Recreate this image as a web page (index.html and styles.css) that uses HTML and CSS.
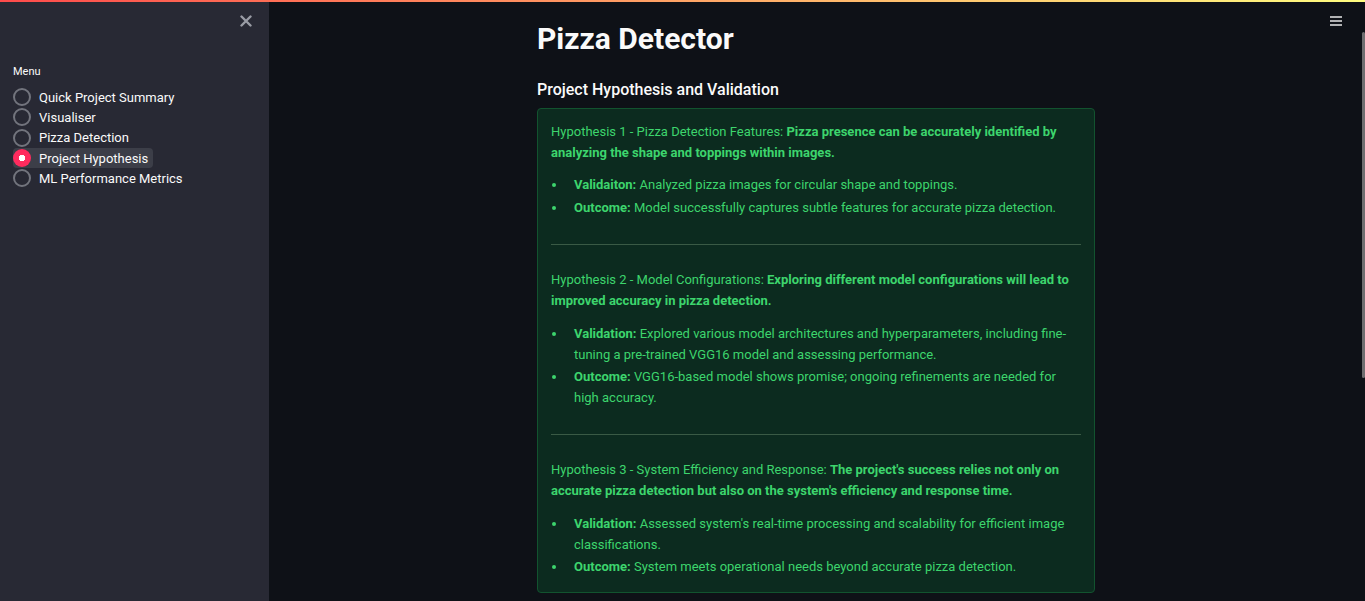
FILE: index.html
```
<!DOCTYPE html>
<html>
<head>
<meta charset="utf-8">
<link rel="stylesheet" href="styles.css">
</head>
<body>
<div class="decoration"></div>
<div class="app">
  <aside class="sidebar">
    <div class="sidebar-top">
      <button class="close" aria-label="Close sidebar">
        <svg width="12" height="12" viewBox="0 0 12 12"><path d="M1.5 1.5 L10.5 10.5 M10.5 1.5 L1.5 10.5" stroke="#9a9ca5" stroke-width="2.4" stroke-linecap="round"/></svg>
      </button>
    </div>
    <div class="menu-label">Menu</div>
    <ul class="radio-list">
      <li class="radio"><span class="dot"></span><span class="label">Quick Project Summary</span></li>
      <li class="radio"><span class="dot"></span><span class="label">Visualiser</span></li>
      <li class="radio"><span class="dot"></span><span class="label">Pizza Detection</span></li>
      <li class="radio checked"><span class="dot"></span><span class="label">Project Hypothesis</span></li>
      <li class="radio"><span class="dot"></span><span class="label">ML Performance Metrics</span></li>
    </ul>
  </aside>
  <main class="main">
    <div class="toolbar">
      <svg class="burger" width="12" height="10" viewBox="0 0 12 10"><path d="M0 1 H12 M0 5 H12 M0 9 H12" stroke="#e6e6e8" stroke-width="1.6"/></svg>
    </div>
    <div class="block">
      <h1 class="title">Pizza Detector</h1>
      <h3 class="subtitle">Project Hypothesis and Validation</h3>
      <div class="alert">
        <p class="first">Hypothesis 1 - Pizza Detection Features: <b>Pizza presence can be accurately identified by analyzing the shape and toppings within images.</b></p>
        <ul>
          <li><b>Validaiton:</b> Analyzed pizza images for circular shape and toppings.</li>
          <li><b>Outcome:</b> Model successfully captures subtle features for accurate pizza detection.</li>
        </ul>
        <hr>
        <p>Hypothesis 2 - Model Configurations: <b>Exploring different model configurations will lead to improved accuracy in pizza detection.</b></p>
        <ul>
          <li><b>Validation:</b> Explored various model architectures and hyperparameters, including fine-tuning a pre-trained VGG16 model and assessing performance.</li>
          <li><b>Outcome:</b> VGG16-based model shows promise; ongoing refinements are needed for high accuracy.</li>
        </ul>
        <hr>
        <p>Hypothesis 3 - System Efficiency and Response: <b>The project's success relies not only on accurate pizza detection but also on the system's efficiency and response time.</b></p>
        <ul>
          <li><b>Validation:</b> Assessed system's real-time processing and scalability for efficient image classifications.</li>
          <li><b>Outcome:</b> System meets operational needs beyond accurate pizza detection.</li>
        </ul>
      </div>
    </div>
    <div class="scrollbar"></div>
  </main>
</div>
</body>
</html>
```
FILE: styles.css
```
* { box-sizing: border-box; }
html, body { margin: 0; padding: 0; height: 100%; }
body {
  background: #0e1117;
  font-family: Roboto, "Liberation Sans", sans-serif;
  color: #fafafa;
  overflow: hidden;
}
.decoration {
  position: absolute;
  top: 0; left: 0; right: 0;
  height: 2px;
  background: linear-gradient(90deg, #ff4b4b, #fffd80);
  z-index: 10;
}
.app { display: flex; height: 601px; }
.sidebar {
  width: 269px;
  flex: none;
  background: #282934;
  padding: 0 13px;
}
.sidebar-top {
  display: flex;
  justify-content: flex-end;
  padding-top: 15px;
  height: 65px;
}
.close {
  background: none; border: 0; padding: 0;
  width: 12px; height: 12px; margin-right: 4px;
  display: block;
}
.close svg { display: block; }
.menu-label { font-size: 11px; color: #fafafa; line-height: 14px; margin-bottom: 8px; }
.radio-list { list-style: none; margin: 0; padding: 0; }
.radio {
  display: flex; align-items: center;
  height: 20.3px;
  font-size: 13px;
  color: #fafafa;
}
.radio .dot {
  width: 18px; height: 18px; border-radius: 50%;
  border: 2px solid #72747d;
  flex: none;
  margin-right: 8px;
}
.radio.checked { background: #3c3e48; border-radius: 4px; width: 140px; }
.radio.checked .dot {
  border: 0;
  background: #ff2b5e radial-gradient(circle, #ffffff 0 3px, transparent 3.5px);
}
.main { flex: 1; position: relative; padding-right: 2px; }
.toolbar {
  position: absolute; top: 16px; right: 23px;
}
.burger { display: block; }
.block {
  width: 558px;
  margin: 0 auto;
  padding-top: 20px;
}
.title {
  font-size: 30px; font-weight: 700; margin: 0; line-height: 38px; color: #fafafa;
}
.subtitle {
  font-size: 16px; font-weight: 500; margin: 21px 0 7px; line-height: 22px; color: #fafafa;
}
.alert {
  background: #0c2b1f;
  border: 1px solid #12532f;
  border-radius: 4px;
  color: #3dd56d;
  font-size: 13px;
  line-height: 21px;
  padding: 12px 13px 12px 13px;
}
.alert p { margin: 0 0 13px; }
.alert p.first { margin-bottom: 12px; }
.alert ul { margin: 0; padding-left: 23px; list-style: none; }
.alert li { margin-bottom: 2px; line-height: 20.5px; position: relative; }
.alert li::before {
  content: "";
  position: absolute;
  left: -22px; top: 8px;
  width: 4px; height: 4px; border-radius: 50%;
  background: #3dd56d;
}
.alert hr {
  border: 0; border-top: 1px solid #3a5a45; margin: 26px 0 24px;
}
.scrollbar {
  position: absolute; right: 0; top: 32px; width: 3px; height: 346px;
  background: #6e6e70; border-radius: 2px;
}
```
